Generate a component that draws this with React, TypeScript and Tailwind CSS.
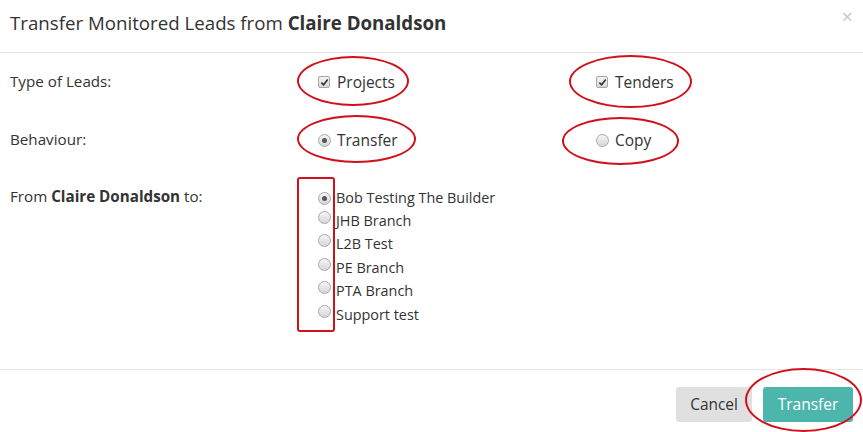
import React from 'react';

const font = { fontFamily: '"Open Sans", "Liberation Sans", sans-serif' };

const Check: React.FC = () => (
  <span className="inline-flex h-[12px] w-[12px] items-center justify-center rounded-[2px] border border-[#a6a6a6] bg-gradient-to-b from-[#f4f4f4] to-[#d8d8d8]">
    <svg width="9" height="9" viewBox="0 0 10 10">
      <path d="M1.5 5.2 L4 7.6 L8.6 1.8" fill="none" stroke="#333" strokeWidth="1.8" />
    </svg>
  </span>
);

const Radio: React.FC<{ on?: boolean }> = ({ on }) => (
  <span className="inline-flex h-[13px] w-[13px] items-center justify-center rounded-full border border-[#a8a8a8] bg-gradient-to-b from-[#f6f6f6] to-[#d6d6d6]">
    {on && <span className="h-[5px] w-[5px] rounded-full bg-[#555]" />}
  </span>
);

const Ring: React.FC<{ cls: string }> = ({ cls }) => (
  <div className={`pointer-events-none absolute rounded-[50%] border-2 border-[#d0101b] ${cls}`} />
);

const branches = ['Bob Testing The Builder', 'JHB Branch', 'L2B Test', 'PE Branch', 'PTA Branch', 'Support test'];

export default function App() {
  return (
    <div style={font} className="relative h-[432px] w-[863px] overflow-hidden bg-white text-[#333]">
      {/* header */}
      <div className="flex h-[53px] items-start justify-between border-b border-[#e5e5e5] pl-[10px] pr-[10px] pt-[10px]">
        <h4 className="text-[18.7px] leading-[26px]">
          Transfer Monitored Leads from <b className="font-bold">Claire Donaldson</b>
        </h4>
        <span className="-mt-[3px] text-[20px] leading-[20px] text-[#c8c8c8]">×</span>
      </div>

      {/* body */}
      <div className="h-[316px] px-[10px] pt-[18px] text-[15.2px]">
        <div className="flex h-[58px] items-start">
          <div className="w-[308px] leading-[20px]">Type of Leads:</div>
          <label className="flex w-[278px] items-center gap-[7px] text-[15.5px] leading-[22px]">
            <Check /> Projects
          </label>
          <label className="flex items-center gap-[7px] text-[15.5px] leading-[22px]">
            <Check /> Tenders
          </label>
        </div>
        <div className="flex h-[57px] items-start">
          <div className="w-[308px] leading-[20px]">Behaviour:</div>
          <label className="flex w-[278px] items-center gap-[6px] text-[15.5px] leading-[22px]">
            <Radio on /> Transfer
          </label>
          <label className="flex items-center gap-[6px] text-[15.5px] leading-[22px]">
            <Radio /> Copy
          </label>
        </div>
        <div className="flex items-start">
          <div className="w-[308px] leading-[20px]">
            From <b className="font-bold">Claire Donaldson</b> to:
          </div>
          <div className="flex flex-col text-[14.4px]">
            {branches.map((b, i) => (
              <label key={b} className="flex h-[23.4px] items-center gap-[5px] leading-[20px]">
                <span className="-mt-[4px]"><Radio on={i === 0} /></span>
                {b}
              </label>
            ))}
          </div>
        </div>
      </div>

      {/* footer */}
      <div className="flex justify-end gap-[11px] border-t border-[#e5e5e5] pr-[10px] pt-[17px]">
        <button className="h-[35px] w-[76px] rounded-[3px] bg-[#e0e0e0] text-[15.4px] text-[#333]">Cancel</button>
        <button className="h-[35px] w-[90px] rounded-[3px] bg-[#4db6ac] text-[15.5px] text-white">Transfer</button>
      </div>

      {/* annotations */}
      <Ring cls="left-[297px] top-[56px] h-[50px] w-[112px]" />
      <Ring cls="left-[569px] top-[55px] h-[53px] w-[123px]" />
      <Ring cls="left-[297px] top-[115px] h-[48px] w-[119px]" />
      <Ring cls="left-[562px] top-[117px] h-[48px] w-[117px]" />
      <div className="pointer-events-none absolute left-[297px] top-[177px] h-[155px] w-[38px] rounded-[3px] border-2 border-[#d0101b]" />
      <Ring cls="left-[745px] top-[368px] h-[64px] w-[117px]" />
    </div>
  );
}
